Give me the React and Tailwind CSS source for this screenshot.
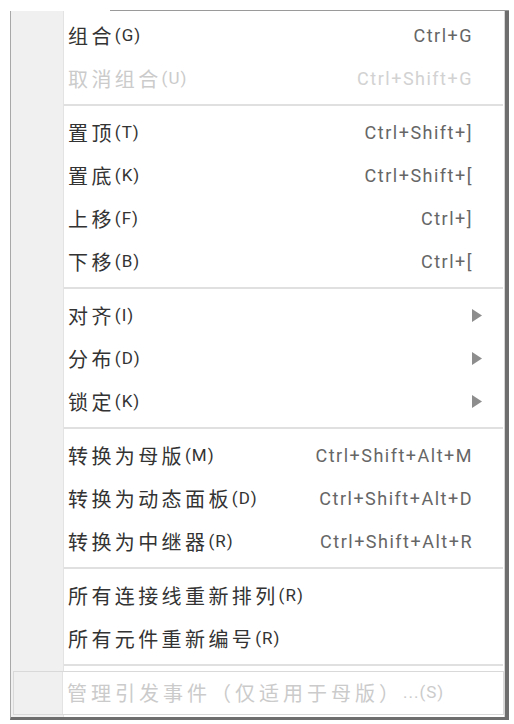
const groups = [
  [
    { label: '组合', key: '(G)', shortcut: 'Ctrl+G' },
    { label: '取消组合', key: '(U)', shortcut: 'Ctrl+Shift+G', disabled: true },
  ],
  [
    { label: '置顶', key: '(T)', shortcut: 'Ctrl+Shift+]' },
    { label: '置底', key: '(K)', shortcut: 'Ctrl+Shift+[' },
    { label: '上移', key: '(F)', shortcut: 'Ctrl+]' },
    { label: '下移', key: '(B)', shortcut: 'Ctrl+[' },
  ],
  [
    { label: '对齐', key: '(I)', submenu: true },
    { label: '分布', key: '(D)', submenu: true },
    { label: '锁定', key: '(K)', submenu: true },
  ],
  [
    { label: '转换为母版', key: '(M)', shortcut: 'Ctrl+Shift+Alt+M' },
    { label: '转换为动态面板', key: '(D)', shortcut: 'Ctrl+Shift+Alt+D' },
    { label: '转换为中继器', key: '(R)', shortcut: 'Ctrl+Shift+Alt+R' },
  ],
  [
    { label: '所有连接线重新排列', key: '(R)' },
    { label: '所有元件重新编号', key: '(R)' },
  ],
];

const cjk = { fontFamily: '"Noto Sans CJK SC", "Noto Sans", sans-serif' };
const latin = { fontFamily: 'Roboto, "Liberation Sans", sans-serif' };

function Gutter() {
  return <div className="w-[53px] shrink-0 self-stretch bg-[#f0f0f0] border-r border-[#e3e3e3]" />;
}

function Row({ item }) {
  const text = item.disabled ? 'text-[#cbcbcb]' : 'text-[#333333]';
  const sc = item.disabled ? 'text-[#d2d2d2]' : 'text-[#666666]';
  return (
    <div className="flex h-[43px]">
      <Gutter />
      <div className="flex flex-1 items-center pl-[4px] pr-[31px]">
        <span className={`text-[20px] tracking-[3.4px] ${text}`} style={cjk}>{item.label}</span>
        <span className={`text-[17px] tracking-[1px] ${text}`} style={latin}>{item.key}</span>
        <span className="flex-1" />
        {item.shortcut && (
          <span className={`text-[18px] tracking-[1.5px] ${sc}`} style={latin}>{item.shortcut}</span>
        )}
        {item.submenu && (
          <svg width="11" height="13" viewBox="0 0 11 13" className="mr-[-10px]">
            <path d="M0 0 L10 6.5 L0 13 Z" fill="#8d8d8d" />
          </svg>
        )}
      </div>
    </div>
  );
}

function Separator() {
  return (
    <div className="flex h-[11px]">
      <Gutter />
      <div className="flex-1 pt-[4px]">
        <div className="h-[2px] bg-[#e0e0e0] mr-[1px]" />
      </div>
    </div>
  );
}

export default function App() {
  return (
    <div className="w-[514px] h-[724px] bg-white">
      <div className="ml-[10px] pt-[10px] w-[499px]">
        <div className="flex h-[1px]">
          <div className="w-[100px]" />
          <div className="flex-1 bg-[#9a9a9a]" />
        </div>
        <div className="flex flex-col border-l border-[#a8a8a8] border-r-4 border-r-[#6e6e6e] border-b-[3px] border-b-[#6e6e6e]">
          <div className="flex flex-col border-r border-[#d6d6d6]">
            <div className="flex h-[3px]">
              <Gutter />
            </div>
            {groups.map((g, gi) => (
              <div key={gi}>
                {g.map((item, i) => (
                  <Row key={i} item={item} />
                ))}
                <Separator />
              </div>
            ))}
            <div className="flex h-[44px] bg-[#f0f0f0]">
              <div className="flex flex-1 ml-[2px] border border-[#d9d9d9] bg-white">
                <div className="w-[49px] shrink-0 bg-[#f0f0f0] border-r border-[#e3e3e3]" />
                <div className="flex flex-1 items-center pl-[4px]">
                  <span className="text-[20px] tracking-[4px] text-[#cbcbcb]" style={cjk}>
                    管理引发事件（仅适用于母版）
                  </span>
                  <span className="text-[17px] tracking-[1px] text-[#cbcbcb]" style={latin}>...(S)</span>
                </div>
              </div>
            </div>
            <div className="flex h-[2px]">
              <Gutter />
            </div>
          </div>
        </div>
      </div>
    </div>
  );
}
